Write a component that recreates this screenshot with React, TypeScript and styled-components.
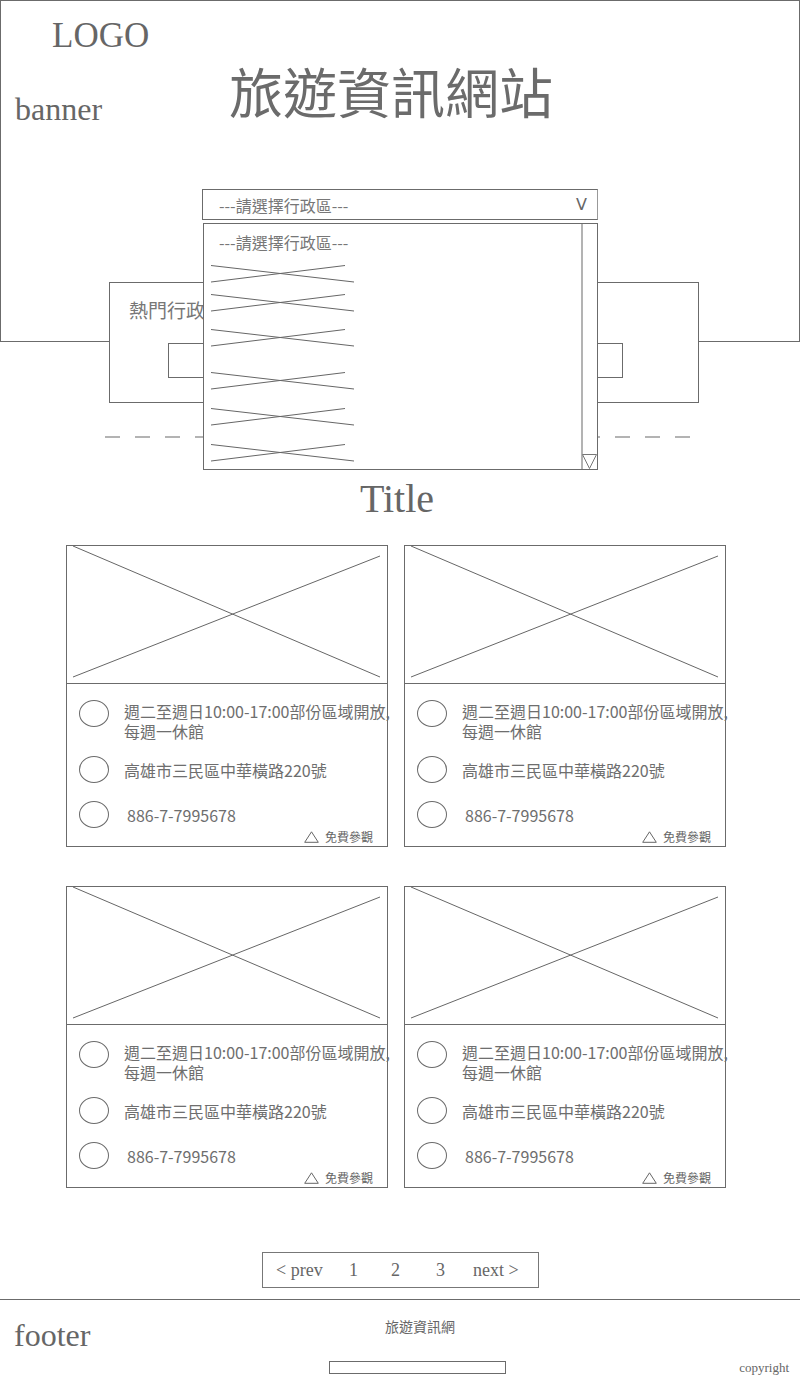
import React from "react";
import { styled, createGlobalStyle } from "styled-components";

const GlobalStyle = createGlobalStyle`
  body {
    margin: 0;
    background: #fff;
    font-family: "Noto Sans CJK TC", "Noto Sans", sans-serif;
    color: #666;
  }
  #root {
    width: 800px;
  }
`;

const serif = `"Liberation Serif", "DejaVu Serif", serif`;
const cjk = `"Noto Sans CJK TC", "Noto Sans", sans-serif`;

const districtGaps = [12, 11, 17, 25, 18, 18];

const spots = [
  {
    hours: "週二至週日10:00-17:00部份區域開放,",
    hours2: "每週一休館",
    address: "高雄市三民區中華橫路220號",
    phone: "886-7-7995678",
  },
  {
    hours: "週二至週日10:00-17:00部份區域開放,",
    hours2: "每週一休館",
    address: "高雄市三民區中華橫路220號",
    phone: "886-7-7995678",
  },
  {
    hours: "週二至週日10:00-17:00部份區域開放,",
    hours2: "每週一休館",
    address: "高雄市三民區中華橫路220號",
    phone: "886-7-7995678",
  },
  {
    hours: "週二至週日10:00-17:00部份區域開放,",
    hours2: "每週一休館",
    address: "高雄市三民區中華橫路220號",
    phone: "886-7-7995678",
  },
];

function CrossMark() {
  return (
    <svg width="144" height="18" viewBox="0 0 144 18">
      <line x1="0" y1="0.5" x2="143" y2="17" stroke="#666" strokeWidth="1" />
      <line x1="0" y1="17" x2="134" y2="0.5" stroke="#666" strokeWidth="1" />
    </svg>
  );
}

function Spot({ hours, hours2, address, phone }: (typeof spots)[number]) {
  return (
    <Card>
      <Picture>
        <svg width="320" height="137" viewBox="0 0 320 137">
          <line x1="6" y1="0" x2="313" y2="131" stroke="#666" strokeWidth="1" />
          <line x1="6" y1="131" x2="313" y2="10" stroke="#666" strokeWidth="1" />
        </svg>
      </Picture>
      <Info>
        <InfoRow $top>
          <Dot />
          <InfoText>
            <Line>{hours}</Line>
            <Line>{hours2}</Line>
          </InfoText>
        </InfoRow>
        <InfoRow>
          <Dot />
          <InfoText>{address}</InfoText>
        </InfoRow>
        <InfoRow $shift={3}>
          <Dot />
          <InfoText $indent={3}>{phone}</InfoText>
        </InfoRow>
        <Badge>
          <svg width="15" height="12" viewBox="0 0 15 12">
            <polygon points="7.5,0.8 14.3,11.3 0.7,11.3" fill="none" stroke="#666" strokeWidth="1" />
          </svg>
          免費參觀
        </Badge>
      </Info>
    </Card>
  );
}

export default function App() {
  return (
    <Page>
      <GlobalStyle />
      <Banner>
        <Logo>LOGO</Logo>
        <TitleRow>
          <BannerLabel>banner</BannerLabel>
          <SiteTitle>旅遊資訊網站</SiteTitle>
        </TitleRow>
        <SelectWrap>
          <SelectBox>
            <span>---請選擇行政區---</span>
            <Caret>V</Caret>
          </SelectBox>
          <Dropdown>
            <OptionList>
              <OptionText>---請選擇行政區---</OptionText>
              {districtGaps.map((gap, i) => (
                <OptionItem key={i} $gap={gap}>
                  <CrossMark />
                </OptionItem>
              ))}
            </OptionList>
            <ScrollBar>
              <svg width="15" height="15" viewBox="0 0 15 15">
                <polygon points="0.5,0.5 14.5,0.5 7.5,14.5" fill="none" stroke="#777" strokeWidth="1" />
              </svg>
            </ScrollBar>
          </Dropdown>
        </SelectWrap>
      </Banner>

      <HotBox>
        <HotLabel>熱門行政區</HotLabel>
        <HotRow>
          <HotButton />
          <HotButton />
          <HotButton />
        </HotRow>
      </HotBox>

      <DashLine />

      <SectionTitle>Title</SectionTitle>

      <CardGrid>
        {spots.map((s, i) => (
          <Spot key={i} {...s} />
        ))}
      </CardGrid>

      <Pager>
        <span>&lt; prev</span>
        <span>1</span>
        <span>2</span>
        <span>3</span>
        <span>next &gt;</span>
      </Pager>

      <Footer>
        <FooterLabel>footer</FooterLabel>
        <FooterCenter>
          <FooterName>旅遊資訊網</FooterName>
          <FooterInput />
        </FooterCenter>
        <Copyright>copyright</Copyright>
      </Footer>
    </Page>
  );
}

const Page = styled.div`
  width: 800px;
  display: flex;
  flex-direction: column;
`;

const Banner = styled.header`
  position: relative;
  box-sizing: border-box;
  width: 800px;
  height: 342px;
  border: 1px solid #6b6b6b;
`;

const Logo = styled.div`
  margin: 17px 0 0 51px;
  font: 35px/36px ${serif};
  color: #666;
`;

const TitleRow = styled.div`
  display: grid;
  grid-template-columns: 214px auto;
  align-items: start;
  margin-top: 7px;
  padding-left: 14px;
`;

const BannerLabel = styled.div`
  margin-top: 32px;
  font: 32px/32px ${serif};
  color: #666;
`;

const SiteTitle = styled.h1`
  margin: 0;
  font: 400 54px/60px ${cjk};
  color: #6b6b6b;
`;

const SelectWrap = styled.div`
  position: relative;
  width: 396px;
  margin: 64px 0 0 201px;
`;

const SelectBox = styled.div`
  box-sizing: border-box;
  height: 31px;
  border: 1px solid #6b6b6b;
  border-right-color: #999;
  display: flex;
  align-items: center;
  justify-content: space-between;
  padding: 0 10px 0 16px;
  font: 16px/20px ${cjk};
  color: #777;
`;

const Caret = styled.span`
  font: 16px/20px "DejaVu Sans", sans-serif;
  color: #666;
`;

const Dropdown = styled.div`
  position: absolute;
  z-index: 2;
  top: calc(100% + 3px);
  left: 1px;
  box-sizing: border-box;
  width: 395px;
  height: 247px;
  border: 1px solid #6b6b6b;
  background: #fff;
  display: flex;
`;

const OptionList = styled.div`
  flex: 1;
  padding: 7px 0 0 7px;
  display: flex;
  flex-direction: column;
  align-items: flex-start;
`;

const OptionText = styled.div`
  padding-left: 8px;
  font: 16px/22px ${cjk};
  color: #777;
`;

const OptionItem = styled.div<{ $gap: number }>`
  margin-top: ${({ $gap }) => $gap}px;
  height: 18px;
  svg {
    display: block;
  }
`;

const ScrollBar = styled.div`
  width: 14px;
  border-left: 2px solid #b3b3b3;
  display: flex;
  flex-direction: column;
  justify-content: flex-end;
  svg {
    display: block;
    margin-left: -1px;
  }
`;

const HotBox = styled.section`
  position: relative;
  z-index: 1;
  box-sizing: border-box;
  width: 590px;
  height: 121px;
  margin: -60px 0 0 109px;
  padding: 14px 0 0 19px;
  border: 1px solid #6b6b6b;
  background: #fff;
`;

const HotLabel = styled.div`
  font: 19px/26px ${cjk};
  color: #777;
`;

const HotRow = styled.div`
  display: flex;
  gap: 25px;
  margin: 20px 0 0 39px;
`;

const HotButton = styled.div`
  box-sizing: border-box;
  width: 135px;
  height: 35px;
  border: 1px solid #6b6b6b;
`;

const DashLine = styled.div`
  width: 585px;
  height: 2px;
  margin: 33px 0 0 105px;
  background: repeating-linear-gradient(to right, #b3b3b3 0 15px, transparent 15px 30px);
`;

const SectionTitle = styled.h2`
  margin: 41px 0 0;
  text-align: center;
  font: 400 40px/40px ${serif};
  color: #666;
  padding-right: 6px;
`;

const CardGrid = styled.div`
  display: grid;
  grid-template-columns: 322px 322px;
  column-gap: 16px;
  row-gap: 39px;
  margin-top: 26px;
  padding-left: 66px;
`;

const Card = styled.article`
  box-sizing: border-box;
  height: 302px;
  border: 1px solid #6b6b6b;
  display: flex;
  flex-direction: column;
`;

const Picture = styled.div`
  height: 137px;
  border-bottom: 1px solid #6b6b6b;
  svg {
    display: block;
  }
`;

const Info = styled.div`
  flex: 1;
  display: flex;
  flex-direction: column;
  gap: 15px;
  padding: 16px 0 0 12px;
`;

const InfoRow = styled.div<{ $top?: boolean; $shift?: number }>`
  display: flex;
  align-items: ${({ $top }) => ($top ? "flex-start" : "center")};
  gap: 15px;
  margin-top: ${({ $shift }) => $shift ?? 0}px;
  white-space: nowrap;
`;

const Dot = styled.span`
  flex: none;
  box-sizing: border-box;
  width: 30px;
  height: 27px;
  border: 1px solid #6b6b6b;
  border-radius: 50%;
`;

const InfoText = styled.div<{ $indent?: number }>`
  padding-left: ${({ $indent }) => $indent ?? 0}px;
  margin-top: 1px;
  font: 16px/20px ${cjk};
  color: #6e6e6e;
`;

const Line = styled.div`
  height: 20px;
`;

const Badge = styled.div`
  align-self: flex-end;
  display: flex;
  align-items: center;
  gap: 6px;
  margin: -13px 14px 0 0;
  font: 12px/14px ${cjk};
  color: #666;
  svg {
    display: block;
  }
`;

const Pager = styled.nav`
  align-self: center;
  box-sizing: border-box;
  width: 277px;
  height: 36px;
  margin: 64px 0 0 1px;
  padding: 0 14px 0 13px;
  border: 1px solid #777;
  display: grid;
  grid-template-columns: 73px 42px 45px 37px 51px;
  align-items: center;
  font: 18px/20px ${serif};
  color: #666;
  white-space: nowrap;
`;

const Footer = styled.footer`
  box-sizing: border-box;
  height: 86px;
  margin-top: 11px;
  border-top: 1px solid #6b6b6b;
  display: grid;
  grid-template-columns: 329px 177px 1fr;
`;

const FooterLabel = styled.div`
  padding: 19px 0 0 14px;
  font: 32px/32px ${serif};
  color: #666;
`;

const FooterCenter = styled.div`
  display: flex;
  flex-direction: column;
  align-items: center;
  padding-top: 16px;
`;

const FooterName = styled.div`
  padding-left: 5px;
  font: 14px/20px ${cjk};
  color: #666;
`;

const FooterInput = styled.div`
  box-sizing: border-box;
  width: 177px;
  height: 13px;
  margin-top: 25px;
  border: 1px solid #6b6b6b;
`;

const Copyright = styled.div`
  align-self: end;
  justify-self: end;
  padding: 0 11px 9px 0;
  font: 13px/16px ${serif};
  color: #666;
`;
